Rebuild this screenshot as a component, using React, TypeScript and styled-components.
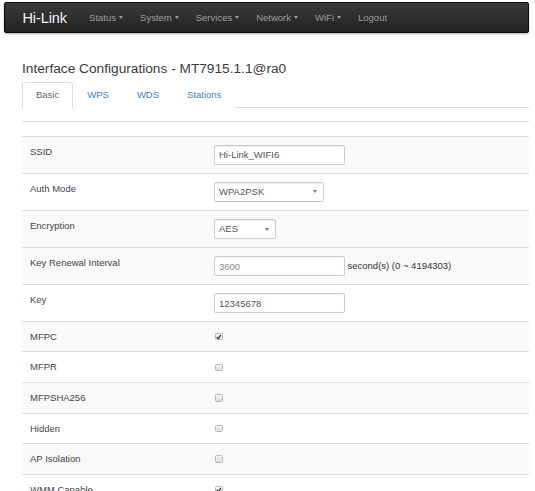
import React from "react";
import styled, { createGlobalStyle } from "styled-components";

const GlobalStyle = createGlobalStyle`
  html, body { margin: 0; padding: 0; overflow: hidden; background: #fff; }
  body { font-family: "Liberation Sans", Arial, Helvetica, sans-serif; color: #333; }
  * { box-sizing: border-box; }
`;

const Page = styled.div`
  padding: 2px 6px 0 4px;
`;

const Navbar = styled.nav`
  display: flex;
  align-items: center;
  height: 31px;
  padding-left: 17.5px;
  background: linear-gradient(to bottom, #3a3a3a 0%, #222 100%);
  border: 1px solid #0a0a0a;
  border-radius: 2px;
  box-shadow: 0 1px 2px rgba(0, 0, 0, 0.3);
`;

const Brand = styled.span`
  font-size: 14.5px;
  color: #f2f2f2;
  margin-right: 13.7px;
  letter-spacing: -0.1px;
`;

const NavItem = styled.span`
  display: inline-flex;
  align-items: center;
  font-size: 9.5px;
  color: #9d9d9d;
  padding: 0 8.5px;
`;

const Caret = styled.span`
  display: inline-block;
  width: 0;
  height: 0;
  margin-left: 3px;
  border-top: 3px solid #9d9d9d;
  border-left: 2.5px solid transparent;
  border-right: 2.5px solid transparent;
`;

const Content = styled.div`
  padding-left: 18px;
`;

const Title = styled.h3`
  margin: 27.6px 0 0;
  font-size: 13.7px;
  line-height: 15px;
  font-weight: normal;
  color: #3a3a3a;
`;

const Tabs = styled.div`
  display: flex;
  margin-top: 6.4px;
  border-bottom: 1px solid #ddd;
`;

const Tab = styled.span<{ $active?: boolean }>`
  padding: 6px 13px;
  line-height: 12px;
  font-size: 9.5px;
  margin-bottom: -1px;
  border: 1px solid ${(p) => (p.$active ? "#ddd" : "transparent")};
  border-bottom-color: transparent;
  border-radius: 3px 3px 0 0;
  background: #fff;
  color: ${(p) => (p.$active ? "#666" : "#3f7fbf")};
`;

const Table = styled.div`
  margin-top: 13px;
`;

const Spacer = styled.div`
  height: 15px;
  border-top: 1px solid #ddd;
`;

const Row = styled.div<{ $striped?: boolean }>`
  display: grid;
  grid-template-columns: 184px 1fr;
  border-top: 1px solid #ddd;
  background: ${(p) => (p.$striped ? "#f9f9f9" : "#fff")};
`;

const LabelCell = styled.div`
  padding: 7.9px 8px;
  font-size: 9.5px;
  line-height: 13.8px;
  color: #444;
`;

const ValueCell = styled.div`
  display: flex;
  align-items: center;
  padding: 7.9px 8px;
  font-size: 9.5px;
  line-height: 13.8px;
  min-height: 13.8px;
`;

const TextInput = styled.input<{ $muted?: boolean }>`
  width: 131px;
  height: 20px;
  padding: 0 4px;
  margin: 0;
  border: 1px solid #ccc;
  border-radius: 2px;
  box-shadow: inset 0 1px 1px rgba(0, 0, 0, 0.075);
  font-family: inherit;
  font-size: 9.5px;
  color: ${(p) => (p.$muted ? "#8a8a8a" : "#555")};
  background: #fff;
  outline: none;
`;

const SelectBox = styled.div<{ $w: number }>`
  display: flex;
  align-items: center;
  justify-content: space-between;
  width: ${(p) => p.$w}px;
  height: 20.5px;
  padding: 0 6px 0 4px;
  border: 1px solid #ccc;
  border-radius: 2px;
  box-shadow: inset 0 1px 1px rgba(0, 0, 0, 0.075);
  background: #fff;
  font-size: 9.5px;
  color: #555;
`;

const SelectArrow = styled.span`
  display: inline-block;
  width: 0;
  height: 0;
  border-top: 3px solid #777;
  border-left: 2px solid transparent;
  border-right: 2px solid transparent;
`;

const Unit = styled.span`
  margin-left: 2.5px;
  color: #333;
  font-size: 9.5px;
`;

const Check = styled.span`
  display: inline-flex;
  align-items: center;
  justify-content: center;
  width: 7.5px;
  height: 7.5px;
  margin-left: 1px;
  border: 1px solid #b8b8b8;
  border-radius: 1.5px;
  background: linear-gradient(to bottom, #f6f6f6, #dcdcdc);
`;

type Field =
  | { label: string; kind: "input"; value: string; muted?: boolean; unit?: string; striped: boolean }
  | { label: string; kind: "select"; value: string; width: number; striped: boolean }
  | { label: string; kind: "check"; checked: boolean; striped: boolean };

const fields: Field[] = [
  { label: "SSID", kind: "input", value: "Hi-Link_WIFI6", striped: true },
  { label: "Auth Mode", kind: "select", value: "WPA2PSK", width: 110, striped: false },
  { label: "Encryption", kind: "select", value: "AES", width: 62, striped: true },
  { label: "Key Renewal Interval", kind: "input", value: "3600", muted: true, unit: "second(s) (0 ~ 4194303)", striped: true },
  { label: "Key", kind: "input", value: "12345678", striped: false },
  { label: "MFPC", kind: "check", checked: true, striped: true },
  { label: "MFPR", kind: "check", checked: false, striped: false },
  { label: "MFPSHA256", kind: "check", checked: false, striped: true },
  { label: "Hidden", kind: "check", checked: false, striped: false },
  { label: "AP Isolation", kind: "check", checked: false, striped: true },
  { label: "WMM Capable", kind: "check", checked: true, striped: false },
];

function Value({ f }: { f: Field }) {
  if (f.kind === "input") {
    return (
      <>
        <TextInput value={f.value} readOnly $muted={f.muted} />
        {f.unit && <Unit>{f.unit}</Unit>}
      </>
    );
  }
  if (f.kind === "select") {
    return (
      <SelectBox $w={f.width}>
        <span>{f.value}</span>
        <SelectArrow />
      </SelectBox>
    );
  }
  return (
    <Check>
      {f.checked && (
        <svg width="6" height="6" viewBox="0 0 6 6">
          <path d="M0.8 3.2 L2.3 4.8 L5.3 0.9" fill="none" stroke="#222" strokeWidth="1.3" />
        </svg>
      )}
    </Check>
  );
}

export default function App() {
  const menu = ["Status", "System", "Services", "Network", "WiFi"];
  return (
    <>
      <GlobalStyle />
      <Page>
        <Navbar>
          <Brand>Hi-Link</Brand>
          {menu.map((m) => (
            <NavItem key={m}>
              {m}
              <Caret />
            </NavItem>
          ))}
          <NavItem>Logout</NavItem>
        </Navbar>
        <Content>
          <Title>Interface Configurations - MT7915.1.1@ra0</Title>
          <Tabs>
            <Tab $active>Basic</Tab>
            <Tab>WPS</Tab>
            <Tab>WDS</Tab>
            <Tab>Stations</Tab>
          </Tabs>
          <Table>
            <Spacer />
            {fields.map((f) => (
              <Row key={f.label} $striped={f.striped}>
                <LabelCell>{f.label}</LabelCell>
                <ValueCell>
                  <Value f={f} />
                </ValueCell>
              </Row>
            ))}
          </Table>
        </Content>
      </Page>
    </>
  );
}
